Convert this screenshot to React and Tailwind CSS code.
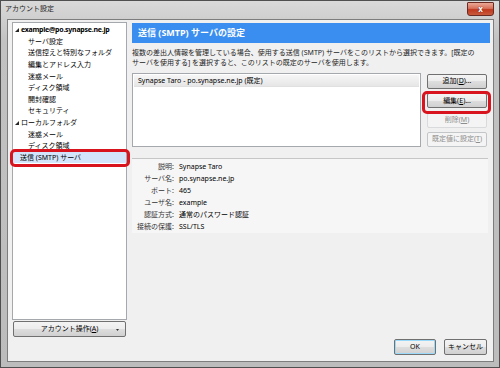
const btn =
  'flex h-[15px] items-center justify-center rounded-[2px] border border-[#707070] bg-[linear-gradient(#f4f4f4,#ececec_50%,#dedede_50%,#d0d0d0)] text-[7px] text-black'
const btnOff =
  'flex h-[15px] items-center justify-center rounded-[2px] border border-[#c3c6c9] bg-[#f4f4f4] text-[7px] text-[#8d8d8d]'

const tree = [
  { t: 'example@po.synapse.ne.jp', root: true, arrow: true, bold: true },
  { t: 'サーバ設定' },
  { t: '送信控えと特別なフォルダ' },
  { t: '編集とアドレス入力' },
  { t: '迷惑メール' },
  { t: 'ディスク領域' },
  { t: '開封確認' },
  { t: 'セキュリティ' },
  { t: 'ローカルフォルダ', root: true, arrow: true },
  { t: '迷惑メール' },
  { t: 'ディスク領域' },
  { t: '送信 (SMTP) サーバ', root: true, selected: true },
]

const details = [
  ['説明:', 'Synapse Taro'],
  ['サーバ名:', 'po.synapse.ne.jp'],
  ['ポート:', '465'],
  ['ユーザ名:', 'example'],
  ['認証方式:', '通常のパスワード認証'],
  ['接続の保護:', 'SSL/TLS'],
]

function Key({ k }) {
  return <span className="underline">{k}</span>
}

export default function App() {
  return (
    <div className="relative flex h-[368px] w-[500px] flex-col overflow-hidden border border-[#4f4f4f] bg-[linear-gradient(#d9d9d9,#c2c2c2_40px,#bcbcbc)] font-['Noto_Sans','Noto_Sans_CJK_JP',sans-serif] text-black">
      {/* title bar */}
      <div className="flex h-[18px] shrink-0 items-start justify-between pl-[4px] pr-[5px]">
        <span className="mt-[3px] text-[7px] leading-[10px] text-[#1e1e1e]">アカウント設定</span>
        <div className="mt-[1px] flex h-[14px] w-[27px] items-center justify-center rounded-b-[3px] rounded-t-[1px] border border-[#6b2a22] bg-[linear-gradient(#eaa896,#d7705a_45%,#c0391f_55%,#c85a3c)] text-[8px] font-bold leading-none text-white [text-shadow:0_0_1px_#3b0d05]">
          x
        </div>
      </div>

      {/* client area */}
      <div className="mb-[5px] ml-[6px] mr-[5px] flex flex-1 border border-[#7d7d7d] bg-[#f0f0f0] pl-[4px] pr-[3px] pt-[2px]">
        {/* left column */}
        <div className="flex w-[115px] shrink-0 flex-col">
          <div className="h-[298px] border border-[#a5a9ae] bg-white pt-[1px]">
            {tree.map((r, i) => (
              <div
                key={i}
                className={`flex h-[11.6px] items-center text-[7px] leading-none ${
                  r.selected ? 'bg-[#d3e5fa]' : ''
                } ${r.root ? 'pl-[7px]' : 'pl-[15px]'} ${r.bold ? 'font-bold tracking-[-0.25px]' : ''}`}
              >
                {r.arrow && (
                  <svg width="4" height="4" viewBox="0 0 4 4" className="-ml-[5px] mr-[2px] shrink-0">
                    <polygon points="4,0 4,4 0,4" fill="#262626" />
                  </svg>
                )}
                <span className="whitespace-nowrap">{r.t}</span>
              </div>
            ))}
          </div>
          <div className={`${btn} relative mx-[1px] mt-[1px] h-[16px]`}>
            アカウント操作(<Key k="A" />)
            <svg width="3" height="2" viewBox="0 0 3 2" className="absolute right-[6px] top-[7px]">
              <polygon points="0,0 3,0 1.5,2" fill="#333" />
            </svg>
          </div>
        </div>

        {/* right column */}
        <div className="ml-[5px] flex min-w-0 flex-1 flex-col pb-[6px] pt-[1px]">
          <div className="flex h-[20px] shrink-0 items-center bg-[#3a8ef0] pl-[6px] text-[9px] font-bold text-white">
            送信 (SMTP) サーバの設定
          </div>
          <p className="mt-[5px] text-[7px] leading-[9.5px] text-[#1e1e1e]">
            <span className="block whitespace-nowrap">
              複数の差出人情報を管理している場合、使用する送信 (SMTP) サーバをこのリストから選択できます。[既定の
            </span>
            <span className="block whitespace-nowrap">
              サーバを使用する] を選択すると、このリストの既定のサーバを使用します。
            </span>
          </p>

          <div className="mt-[6px] flex h-[74px] shrink-0 gap-[6px]">
            <div className="flex-1 border border-[#a5a9ae] bg-white p-[1px]">
              <div className="flex h-[12px] items-center border-b border-[#e0e0e0] bg-[linear-gradient(#f6f6f6,#e6e6e6)] pl-[4px] text-[7px] leading-none">
                Synapse Taro - po.synapse.ne.jp (既定)
              </div>
            </div>
            <div className="mr-[3px] flex w-[60px] flex-col gap-[4.5px] pt-[1px]">
              <div className={btn}>
                追加(<Key k="D" />)...
              </div>
              <div className={btn}>
                編集(<Key k="E" />)...
              </div>
              <div className={`${btnOff} border-[#d8dadc]`}>
                削除(<Key k="M" />)
              </div>
              <div className={btnOff}>
                既定値に設定(<Key k="T" />)
              </div>
            </div>
          </div>

          <div className="mr-[2px] mt-[11px] h-[75px] shrink-0 border-t border-[#c6c6c6] bg-[#f6f6f6] pt-[1px]">
            {details.map(([l, v]) => (
              <div key={l} className="flex h-[12px] items-center text-[7px] leading-none">
                <span className="w-[42px] shrink-0 text-right text-[#333]">{l}</span>
                <span className="ml-[5px] whitespace-nowrap">{v}</span>
              </div>
            ))}
          </div>

          <div className="mr-[3px] mt-auto flex justify-end gap-[8px]">
            <div className={`${btn} h-[16px] w-[42px] border-[#3c8fc8] shadow-[inset_0_0_0_1px_#9ad9f7]`}>OK</div>
            <div className={`${btn} h-[16px] w-[43px]`}>キャンセル</div>
          </div>
        </div>
      </div>

      {/* annotation boxes */}
      <div className="absolute left-[9px] top-[148px] h-[18px] w-[120px] rounded-[5px] border-[3px] border-[#d8141e]" />
      <div className="absolute left-[421px] top-[90px] h-[23px] w-[69px] rounded-[5px] border-[3px] border-[#d8141e]" />
    </div>
  )
}
